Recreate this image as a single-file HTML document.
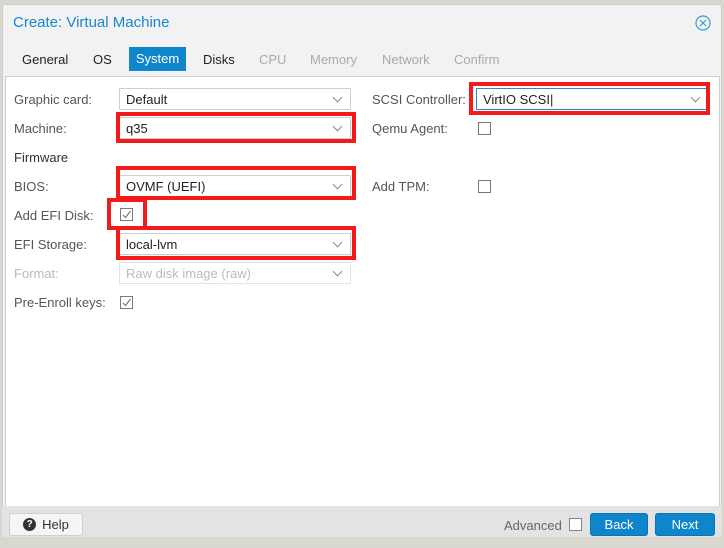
<!DOCTYPE html>
<html><head><style>
*{box-sizing:border-box;margin:0;padding:0}
body{width:724px;height:548px;background:#d8d8d0;font-family:"Liberation Sans",sans-serif;font-size:13px;color:#333;position:relative;overflow:hidden}
.dlg{position:absolute;left:2px;top:4px;width:720px;height:533px;background:#f2f2f2;border:1px solid #ccc;border-radius:3px}
.abs{position:absolute}
.title{left:10px;top:9px;font-size:15px;color:#1a86cf}
.tab{top:47px;font-size:13px;color:#222}
.dis{color:#aaa}
.body{left:2px;top:71px;width:715px;height:431px;background:#fff;border:1px solid #cfcfcf}
.lbl{font-size:13px;color:#555}
.cb{width:232px;height:22px;border:1px solid #cfcfcf;background:#fff;padding:3px 6px;font-size:13px;color:#222}
.cb::after{content:"";position:absolute;right:9px;top:5px;width:6px;height:6px;border-right:1px solid #888;border-bottom:1px solid #888;transform:rotate(45deg)}
.chk{width:13px;height:13px;border:1px solid #777;background:#fff}
.red{border:4px solid #f21a1a}
.btn{height:23px;border-radius:3px;font-size:13px;display:flex;align-items:center;justify-content:center}
</style></head><body>
<div class="dlg">
<div class="abs title">Create: Virtual Machine</div>
<svg class="abs" style="left:692px;top:10px" width="16" height="16"><circle cx="8" cy="8" r="7" fill="none" stroke="#3a9ad9" stroke-width="1.2"/><path d="M5 5L11 11M11 5L5 11" stroke="#3a9ad9" stroke-width="1.2"/></svg>
<div class="abs tab" style="left:19px">General</div>
<div class="abs tab" style="left:90px">OS</div>
<div class="abs" style="left:126px;top:42px;width:57px;height:24px;background:#0f86cc;color:#fff;font-size:13px;line-height:24px;text-align:center">System</div>
<div class="abs tab" style="left:200px">Disks</div>
<div class="abs tab dis" style="left:256px">CPU</div>
<div class="abs tab dis" style="left:307px">Memory</div>
<div class="abs tab dis" style="left:379px">Network</div>
<div class="abs tab dis" style="left:451px">Confirm</div>
<div class="abs body"></div>
</div>
<div class="abs lbl" style="left:14px;top:92px">Graphic card:</div>
<div class="abs cb" style="left:119px;top:88px">Default</div>
<div class="abs lbl" style="left:14px;top:121px">Machine:</div>
<div class="abs cb" style="left:119px;top:117px">q35</div>
<div class="abs lbl" style="left:14px;top:150px;color:#333">Firmware</div>
<div class="abs lbl" style="left:14px;top:179px">BIOS:</div>
<div class="abs cb" style="left:119px;top:175px">OVMF (UEFI)</div>
<div class="abs lbl" style="left:14px;top:208px">Add EFI Disk:</div>
<div class="abs chk" style="left:120px;top:208px"></div>
<svg class="abs" style="left:120px;top:208px" width="13" height="13"><path d="M3 7L5.5 9.5L10.5 3" fill="none" stroke="#777" stroke-width="1.2"/></svg>
<div class="abs lbl" style="left:14px;top:237px">EFI Storage:</div>
<div class="abs cb" style="left:119px;top:233px">local-lvm</div>
<div class="abs lbl" style="left:14px;top:266px;color:#bbb">Format:</div>
<div class="abs cb" style="left:119px;top:262px;color:#bbb;border-color:#e3e3e3">Raw disk image (raw)</div>
<div class="abs lbl" style="left:14px;top:295px">Pre-Enroll keys:</div>
<div class="abs chk" style="left:120px;top:296px"></div>
<svg class="abs" style="left:120px;top:296px" width="13" height="13"><path d="M3 7L5.5 9.5L10.5 3" fill="none" stroke="#777" stroke-width="1.2"/></svg>
<div class="abs lbl" style="left:372px;top:92px">SCSI Controller:</div>
<div class="abs cb" style="left:476px;top:88px;width:233px;border-color:#2a8ad4">VirtIO SCSI|</div>
<div class="abs lbl" style="left:372px;top:121px">Qemu Agent:</div>
<div class="abs chk" style="left:478px;top:122px"></div>
<div class="abs lbl" style="left:372px;top:179px">Add TPM:</div>
<div class="abs chk" style="left:478px;top:180px"></div>
<div class="abs red" style="left:116px;top:112px;width:240px;height:31px"></div>
<div class="abs red" style="left:116px;top:166px;width:240px;height:34px"></div>
<div class="abs red" style="left:107px;top:198px;width:40px;height:32px"></div>
<div class="abs red" style="left:116px;top:226px;width:240px;height:34px"></div>
<div class="abs red" style="left:469px;top:82px;width:241px;height:33px"></div>
<div class="abs" style="left:2px;top:506px;width:720px;height:31px;background:#e3e3e3;border-radius:0 0 3px 3px"></div>
<div class="abs btn" style="left:9px;top:513px;width:74px;background:#f5f5f5;border:1px solid #cfcfcf;color:#333"><span style="display:inline-block;width:13px;height:13px;border-radius:50%;background:#333;color:#fff;font-size:10px;line-height:13px;font-weight:bold;text-align:center;margin-right:6px">?</span>Help</div>
<div class="abs" style="left:504px;top:518px;color:#666">Advanced</div>
<div class="abs chk" style="left:569px;top:518px;border-color:#888"></div>
<div class="abs btn" style="left:590px;top:513px;width:58px;background:#0f86cc;color:#fff;border:1px solid #0b74b3">Back</div>
<div class="abs btn" style="left:655px;top:513px;width:60px;background:#0f86cc;color:#fff;border:1px solid #0b74b3">Next</div>
</body></html>
